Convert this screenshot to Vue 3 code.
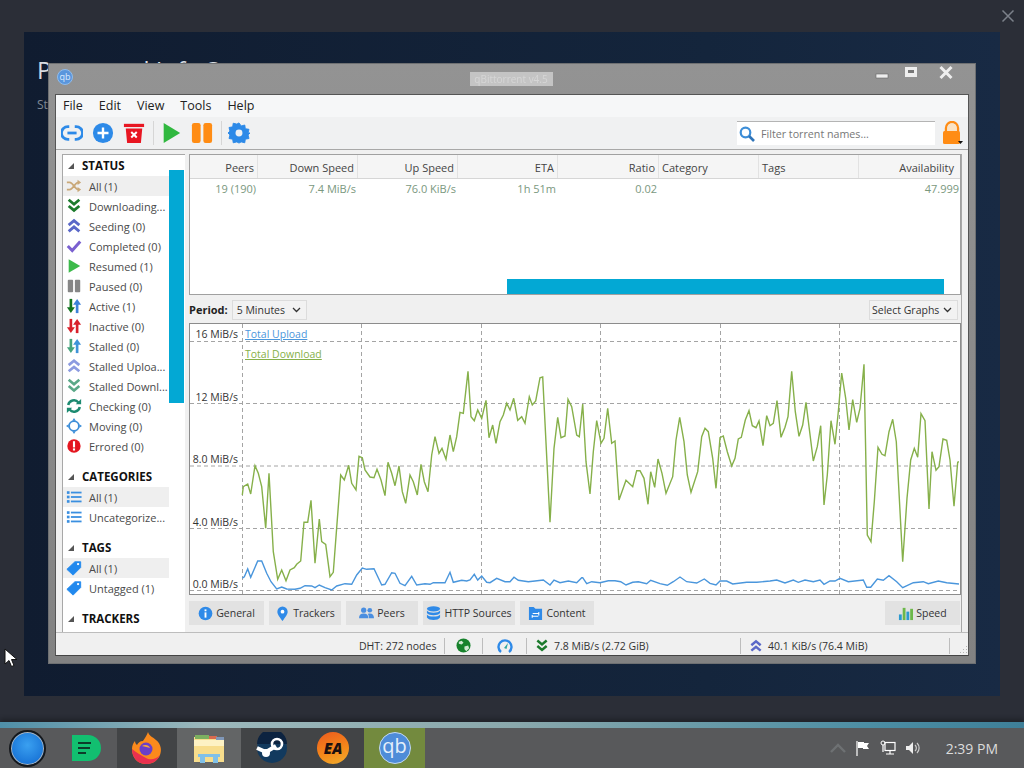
<script setup>
const statusItems = [
  { icon: 'shuffle', label: 'All (1)', on: true },
  { icon: 'dl', label: 'Downloading...' },
  { icon: 'ul', label: 'Seeding (0)' },
  { icon: 'check', label: 'Completed (0)' },
  { icon: 'play', label: 'Resumed (1)' },
  { icon: 'pause', label: 'Paused (0)' },
  { icon: 'active', label: 'Active (1)' },
  { icon: 'inactive', label: 'Inactive (0)' },
  { icon: 'stalled', label: 'Stalled (0)' },
  { icon: 'sul', label: 'Stalled Uploa...' },
  { icon: 'sdl', label: 'Stalled Downl...' },
  { icon: 'checking', label: 'Checking (0)' },
  { icon: 'moving', label: 'Moving (0)' },
  { icon: 'error', label: 'Errored (0)' },
];
const catItems = [
  { icon: 'list', label: 'All (1)', on: true },
  { icon: 'list', label: 'Uncategorize...' },
];
const tagItems = [
  { icon: 'tag', label: 'All (1)', on: true },
  { icon: 'tag', label: 'Untagged (1)' },
];
const groups = [
  { title: 'STATUS', items: statusItems },
  { title: 'CATEGORIES', items: catItems },
  { title: 'TAGS', items: tagItems },
  { title: 'TRACKERS', items: [] },
];

const columns = [
  { name: 'Peers', value: '19 (190)', w: 68 },
  { name: 'Down Speed', value: '7.4 MiB/s', w: 100 },
  { name: 'Up Speed', value: '76.0 KiB/s', w: 100 },
  { name: 'ETA', value: '1h 51m', w: 100 },
  { name: 'Ratio', value: '0.02', w: 101 },
  { name: 'Category', value: '', w: 100, left: true },
  { name: 'Tags', value: '', w: 100, left: true },
  { name: 'Availability', value: '47.999', w: 101 },
];

const tabs = [
  { icon: 'info', label: 'General', w: 75 },
  { icon: 'pin', label: 'Trackers', w: 72 },
  { icon: 'peers', label: 'Peers', w: 72 },
  { icon: 'db', label: 'HTTP Sources', w: 92 },
  { icon: 'folder', label: 'Content', w: 74 },
];

// points read off the reference at 3x, two crops with different x origins
const greenA = [172,600,175,575,188,567,197,597,210,512,220,535,230,575,242,700,252,535,265,770,278,853,290,825,303,857,315,825,328,818,335,808,347,798,357,682,368,682,378,616,390,805,403,672,410,740,422,748,435,845,445,832,467,540,478,555,491,511,500,565,513,585,522,484,532,488,540,525,555,546,567,548,576,523,588,555,600,602,609,502,620,535,630,572,642,513,652,590,662,625,675,540,685,560,697,600,708,508,718,560,729,590,740,480,750,425,762,475,771,460,783,493,795,420,805,470,815,425,825,352,835,355,849,229,858,365,868,377,878,345,890,370,903,316,912,428,923,390,933,445,945,380,955,360,965,325,975,345,986,310,998,376,1010,365,1020,385,1033,305,1042,330,1052,318,1065,248,1073,246,1095,682,1107,460,1118,367,1128,428,1140,423,1149,313,1160,335,1175,420,1183,425,1193,327];
const greenB = [8,327,18,500,30,597,40,470,50,377,63,445,72,430,83,340,95,445,105,438,117,615,138,556,158,575,170,527,180,527,192,550,204,628,212,530,224,577,234,492,246,535,258,595,278,545,288,435,299,367,312,440,322,540,333,592,353,530,365,425,375,400,385,410,398,490,408,580,420,428,430,423,442,470,455,513,465,490,475,432,484,427,496,375,507,347,517,392,528,398,537,378,549,452,560,362,570,392,580,385,591,317,603,427,615,397,624,365,635,229,646,350,657,424,668,390,678,322,700,498,712,455,722,392,732,630,742,540,753,377,765,448,775,350,785,234,797,310,807,405,818,314,830,382,840,340,852,208,862,720,873,740,883,620,894,457,906,478,915,482,927,410,938,373,949,440,968,800,981,610,992,495,1003,460,1013,487,1023,356,1035,377,1047,642,1056,470,1068,526,1077,515,1089,432,1100,436,1110,495,1122,634,1133,502,1137,500];
const blueA = [172,850,178,845,188,822,197,847,218,798,230,798,245,835,258,860,275,882,290,876,305,882,330,883,345,880,360,872,380,873,390,878,403,870,420,878,440,885,455,873,480,866,500,868,515,840,532,819,545,823,567,821,590,870,600,868,620,833,630,835,645,865,660,872,680,844,695,870,720,866,735,868,745,863,780,863,795,832,805,862,830,856,845,858,855,855,868,838,878,855,890,843,905,862,915,863,935,850,960,860,975,860,987,847,1000,856,1030,860,1050,858,1075,855,1095,870,1107,855,1125,863,1150,858,1175,863,1190,848];
const blueB = [8,848,20,866,35,860,60,863,85,857,105,857,122,860,138,870,158,862,175,860,200,866,212,856,240,866,262,871,280,860,300,846,320,860,350,864,373,852,390,865,408,870,420,858,440,858,458,867,500,862,530,862,570,858,590,855,615,864,640,855,655,862,675,855,700,860,720,855,732,868,750,858,765,858,780,850,805,860,850,855,860,877,872,877,892,852,910,856,927,842,950,860,968,878,1000,863,1030,860,1045,866,1075,858,1100,863,1137,867];

// chart box starts at 190,324
const toPoints = (a, b) => {
  const out = [];
  for (let i = 0; i < a.length; i += 2) {
    out.push(`${(185 + a[i] / 3 - 190).toFixed(1)},${(295 + a[i + 1] / 3 - 324).toFixed(1)}`);
  }
  for (let i = 0; i < b.length; i += 2) {
    out.push(`${(580 + b[i] / 3 - 190).toFixed(1)},${(295 + b[i + 1] / 3 - 324).toFixed(1)}`);
  }
  return out.join(' ');
};
const greenLine = toPoints(greenA, greenB);
const blueLine = toPoints(blueA, blueB);

const gridY = [17.5, 79.5, 142, 204.5, 266.5];
const gridX = [52.5, 171.5, 291.5, 410.5, 530.5, 649.5];
const yLabels = [
  { t: '16 MiB/s', y: 3 },
  { t: '12 MiB/s', y: 66 },
  { t: '8.0 MiB/s', y: 128 },
  { t: '4.0 MiB/s', y: 191 },
  { t: '0.0 MiB/s', y: 253 },
];
</script>

<template>
  <div class="screen">
    <svg class="defs" width="0" height="0">
      <defs>
        <symbol id="shuffle" viewBox="0 0 18 18">
          <path d="M1 5h3c4 0 6 8 10 8M1 13h3c4 0 6-8 10-8" fill="none" stroke="#c9a878" stroke-width="2"/>
          <path d="M13 2l4 3-4 3zM13 10l4 3-4 3z" fill="#c9a878"/>
        </symbol>
        <symbol id="dl" viewBox="0 0 18 18">
          <path d="M3 2l6 5 6-5M3 9l6 5 6-5" fill="none" stroke="#1b7a2c" stroke-width="3.2"/>
        </symbol>
        <symbol id="ul" viewBox="0 0 18 18">
          <path d="M3 8l6-5 6 5M3 15l6-5 6 5" fill="none" stroke="#5a68c8" stroke-width="3.2"/>
        </symbol>
        <symbol id="sul" viewBox="0 0 18 18">
          <path d="M3 8l6-5 6 5M3 15l6-5 6 5" fill="none" stroke="#8c9be0" stroke-width="3"/>
        </symbol>
        <symbol id="sdl" viewBox="0 0 18 18">
          <path d="M3 2l6 5 6-5M3 9l6 5 6-5" fill="none" stroke="#5aa888" stroke-width="3"/>
        </symbol>
        <symbol id="check" viewBox="0 0 18 18">
          <path d="M2 9l5 5 9-10" fill="none" stroke="#7a60d0" stroke-width="3.4"/>
        </symbol>
        <symbol id="play" viewBox="0 0 18 18">
          <path d="M3 1.5l13 7.5-13 7.5z" fill="#3cba4a"/>
        </symbol>
        <symbol id="pause" viewBox="0 0 18 18">
          <rect x="2" y="2" width="6" height="14" rx="1" fill="#868686"/>
          <rect x="10" y="2" width="6" height="14" rx="1" fill="#868686"/>
        </symbol>
        <symbol id="active" viewBox="0 0 18 18">
          <path d="M5.5 1v12" stroke="#12751f" stroke-width="3"/>
          <path d="M1 10.5h9l-4.5 6.5z" fill="#12751f"/>
          <path d="M12.5 17V5" stroke="#3d82d8" stroke-width="3"/>
          <path d="M8 7.5h9L12.5 1z" fill="#3d82d8"/>
        </symbol>
        <symbol id="inactive" viewBox="0 0 18 18">
          <path d="M5.5 1v12" stroke="#d8202a" stroke-width="3"/>
          <path d="M1 10.5h9l-4.5 6.5z" fill="#d8202a"/>
          <path d="M12.5 17V5" stroke="#d8202a" stroke-width="3"/>
          <path d="M8 7.5h9L12.5 1z" fill="#d8202a"/>
        </symbol>
        <symbol id="stalled" viewBox="0 0 18 18">
          <path d="M5.5 1v12" stroke="#45a47c" stroke-width="3"/>
          <path d="M1 10.5h9l-4.5 6.5z" fill="#45a47c"/>
          <path d="M12.5 17V5" stroke="#3f94d8" stroke-width="3"/>
          <path d="M8 7.5h9L12.5 1z" fill="#3f94d8"/>
        </symbol>
        <symbol id="checking" viewBox="0 0 18 18">
          <path d="M2.5 8a6.6 6.6 0 0 1 11.5-3" fill="none" stroke="#1c8a70" stroke-width="2.8"/>
          <path d="M11 7h6V1z" fill="#1c8a70"/>
          <path d="M15.5 10a6.6 6.6 0 0 1-11.5 3" fill="none" stroke="#1c8a70" stroke-width="2.8"/>
          <path d="M7 11H1v6z" fill="#1c8a70"/>
        </symbol>
        <symbol id="moving" viewBox="0 0 18 18">
          <circle cx="9" cy="9" r="5.5" fill="#fff" stroke="#3d8ed8" stroke-width="2"/>
          <path d="M9 0l2 3H7zM9 18l-2-3h4zM0 9l3-2v4zM18 9l-3 2V7z" fill="#3d8ed8"/>
        </symbol>
        <symbol id="error" viewBox="0 0 18 18">
          <circle cx="9" cy="9" r="7.5" fill="#e41620"/>
          <rect x="7.8" y="3.6" width="2.4" height="7" fill="#fff"/>
          <rect x="7.8" y="11.7" width="2.4" height="2.4" fill="#fff"/>
        </symbol>
        <symbol id="list" viewBox="0 0 18 18">
          <g fill="#3a8fe0">
            <rect x="1" y="2.5" width="3" height="3"/>
            <rect x="1" y="7.5" width="3" height="3"/>
            <rect x="1" y="12.5" width="3" height="3"/>
            <rect x="5.5" y="3" width="12" height="2"/>
            <rect x="5.5" y="8" width="12" height="2"/>
            <rect x="5.5" y="13" width="12" height="2"/>
          </g>
        </symbol>
        <symbol id="tag" viewBox="0 0 18 18">
          <path d="M1 10.5L10 2h6.5v6.5L8 17z" fill="#2189ee" stroke="#2189ee" stroke-linejoin="round"/>
          <circle cx="13.6" cy="4.6" r="1.3" fill="#fff"/>
        </symbol>
        <symbol id="info" viewBox="0 0 16 16">
          <circle cx="8" cy="8" r="7.3" fill="#2f8ae8"/>
          <rect x="7" y="6.8" width="2" height="5.6" fill="#fff"/>
          <rect x="7" y="3.6" width="2" height="2" fill="#fff"/>
        </symbol>
        <symbol id="pin" viewBox="0 0 16 16">
          <path d="M8 16C5 11.5 2.5 9 2.5 6a5.5 5.5 0 0 1 11 0c0 3-2.5 5.5-5.5 10z" fill="#2f8ae8"/>
          <circle cx="8" cy="6" r="2" fill="#fff"/>
        </symbol>
        <symbol id="peers" viewBox="0 0 16 16">
          <g fill="#4a8ee0">
            <circle cx="5" cy="4.5" r="2.8"/>
            <circle cx="11.5" cy="4.5" r="2.5"/>
            <path d="M0 13c0-3.5 2-5 5-5s5 1.5 5 5z"/>
            <path d="M10.5 13H16c0-3-1.5-5-4.500-5-.8 0-1.500.2-2 .4 1 1.100 1 3 1 4.600z"/>
          </g>
        </symbol>
        <symbol id="db" viewBox="0 0 16 16">
          <g fill="#2f8ae8">
            <ellipse cx="8" cy="3" rx="7" ry="2.8"/>
            <path d="M1 4.8c1 1.700 4 2.400 7 2.400s6-.7 7-2.400v2.700c-1 1.600-4 2.300-7 2.300s-6-.7-7-2.300z"/>
            <path d="M1 9c1 1.600 4 2.300 7 2.300S14 10.600 15 9v3.300c-1 1.800-4 2.700-7 2.700s-6-.9-7-2.700z"/>
          </g>
        </symbol>
        <symbol id="folder" viewBox="0 0 16 16">
          <path d="M1 1h5l2 2h7v12H1z" fill="#2f8ae8"/>
          <path d="M5 8h6.500M11.500 6.500V10M11 11H4.500M4.500 9.500V12.500" stroke="#fff" stroke-width="1.100" fill="none"/>
        </symbol>
      </defs>
    </svg>

    <button class="dismiss" aria-label="Close">
      <svg width="14" height="14" viewBox="0 0 14 14"><path d="M1.500 1.500l11 11M12.500 1.500l-11 11" stroke="#7c818a" stroke-width="1.500"/></svg>
    </button>

    <div class="dialog">
      <h1>Personnel Info Sync</h1>
      <p>Status</p>
    </div>

    <!-- free-floating app window -->
    <div class="window">
      <div class="titlebar">
        <span class="qb-small">qb</span>
        <span class="title-blur">qBittorrent v4.5</span>
        <div class="win-buttons">
          <svg width="16" height="16" viewBox="0 0 16 16"><rect x="2" y="9" width="12" height="4" fill="#eee" stroke="#666" stroke-width=".6"/></svg>
          <svg width="16" height="16" viewBox="0 0 16 16"><rect x="2" y="2" width="12" height="10" fill="#eee"/><rect x="5" y="5" width="6" height="3" fill="#777"/></svg>
          <svg class="win-close" width="16" height="16" viewBox="0 0 16 16"><path d="M2.500 2l11 11M13.500 2l-11 11" stroke="#eee" stroke-width="3"/></svg>
        </div>
      </div>

      <div class="client">
        <div class="menubar">
          <span>File</span><span>Edit</span><span>View</span><span>Tools</span><span>Help</span>
        </div>

        <div class="toolbar">
          <svg class="tool" viewBox="0 0 24 24">
            <path d="M9 5H7.500a7 7 0 0 0 0 14H9M15 5h1.500a7 7 0 0 1 0 14H15" fill="none" stroke="#2d8ae8" stroke-width="3"/>
            <rect x="7" y="10.500" width="10" height="3" fill="#2d8ae8"/>
          </svg>
          <svg class="tool" viewBox="0 0 24 24">
            <circle cx="12" cy="12" r="11" fill="#2d8ae8"/>
            <path d="M12 6v12M6 12h12" stroke="#fff" stroke-width="2.600"/>
          </svg>
          <svg class="tool" viewBox="0 0 24 24">
            <rect x="1" y="2" width="22" height="3.500" fill="#e81622"/>
            <path d="M3 7h18l-1.500 16h-15z" fill="#e81622"/>
            <path d="M9 11l6 6M15 11l-6 6" stroke="#fff" stroke-width="2.200"/>
          </svg>
          <i class="sep"></i>
          <svg class="tool" viewBox="0 0 24 24"><path d="M4 1l18 11L4 23z" fill="#30b83f"/></svg>
          <svg class="tool" viewBox="0 0 24 24">
            <rect x="1" y="1" width="9.500" height="22" rx="2.500" fill="#ff8c14"/>
            <rect x="13.500" y="1" width="9.500" height="22" rx="2.500" fill="#ff8c14"/>
          </svg>
          <i class="sep"></i>
          <svg class="tool" viewBox="0 0 24 24">
            <path d="M12 1l2.400 3.300 3.900-1 .6 4 4 .7-1 3.900L24 12l-2.100 2.100 1 3.900-4 .7-.6 4-3.900-1L12 23l-2.400-1.300-3.900 1-.6-4-4-.7 1-3.900L0 12l2.100-2.100-1-3.900 4-.7.6-4 3.900 1z" fill="#2d8ae8" stroke="#2d8ae8" stroke-linejoin="round"/>
            <circle cx="12" cy="12" r="3.800" fill="#eef1f4"/>
          </svg>
          <div class="filter">
            <svg width="16" height="16" viewBox="0 0 16 16">
              <circle cx="6.500" cy="6.500" r="4.800" fill="none" stroke="#3d8ed8" stroke-width="2.200"/>
              <path d="M10 10l5 5" stroke="#2f74b8" stroke-width="2.600"/>
            </svg>
            <span>Filter torrent names...</span>
          </div>
          <div class="lock">
            <svg width="22" height="24" viewBox="0 0 22 24">
              <path d="M4 11V7a6 6 0 0 1 12 0v4" fill="none" stroke="#ff8c14" stroke-width="2.400"/>
              <path d="M5.500 11V7a4.500 4.500 0 0 1 9 0v4z" fill="#fbe3c4"/>
              <rect x="1" y="10" width="17" height="13" rx="1.500" fill="#ff8c14"/>
              <path d="M16 20h5l-2.500 3z" fill="#111"/>
            </svg>
          </div>
        </div>

        <div class="body">
          <aside class="sidebar">
            <section v-for="g in groups" :key="g.title" class="group">
              <div class="group-title"><i class="caret"></i>{{ g.title }}</div>
              <div v-for="item in g.items" :key="item.label" class="row" :class="{ on: item.on }">
                <svg class="row-icon"><use :href="'#' + item.icon" /></svg>
                <span>{{ item.label }}</span>
              </div>
            </section>
            <div class="side-thumb"></div>
          </aside>

          <main class="main">
            <div class="torrents">
              <div class="thead">
                <div v-for="c in columns" :key="c.name" class="th" :class="{ left: c.left }" :style="{ width: c.w + 'px' }">{{ c.name }}</div>
              </div>
              <div class="tbody">
                <div v-for="c in columns" :key="c.name" class="td" :style="{ width: c.w + 'px' }">{{ c.value }}</div>
              </div>
              <div class="h-thumb"></div>
            </div>

            <div class="period">
              <b>Period:</b>
              <div class="combo">5 Minutes<svg width="9" height="6" viewBox="0 0 9 6"><path d="M1 1l3.500 3.500L8 1" fill="none" stroke="#333" stroke-width="1.300"/></svg></div>
              <div class="combo graphs">Select Graphs<svg width="9" height="6" viewBox="0 0 9 6"><path d="M1 1l3.500 3.500L8 1" fill="none" stroke="#333" stroke-width="1.300"/></svg></div>
            </div>

            <div class="chart">
              <svg class="plot" width="769" height="270">
                <line v-for="y in gridY" :key="'y' + y" x1="0" x2="769" :y1="y" :y2="y" class="grid" />
                <line v-for="x in gridX" :key="'x' + x" y1="0" y2="270" :x1="x" :x2="x" class="grid" />
                <polyline :points="greenLine" fill="none" stroke="#86b04a" stroke-width="1.400" />
                <polyline :points="blueLine" fill="none" stroke="#4a96dc" stroke-width="1.400" />
              </svg>
              <span v-for="l in yLabels" :key="l.t" class="ylabel" :style="{ top: l.y + 'px' }">{{ l.t }}</span>
              <span class="legend up">Total Upload</span>
              <span class="legend down">Total Download</span>
            </div>

            <div class="tabs">
              <div v-for="t in tabs" :key="t.label" class="tab" :style="{ width: t.w + 'px' }">
                <svg class="tab-icon"><use :href="'#' + t.icon" /></svg>{{ t.label }}
              </div>
              <div class="tab speed">
                <svg class="tab-icon" viewBox="0 0 16 16">
                  <rect x="1" y="9" width="3" height="6" fill="#2d9ad0"/>
                  <rect x="5" y="2" width="3" height="13" fill="#6cb84a"/>
                  <rect x="9" y="6" width="3" height="9" fill="#2d9ad0"/>
                  <rect x="13" y="3" width="3" height="12" fill="#6cb84a"/>
                </svg>Speed
              </div>
            </div>
          </main>
        </div>

        <div class="statusbar">
          <span class="st-dht">DHT: 272 nodes</span>
          <i class="st-sep"></i>
          <svg class="st-icon" width="15" height="15" viewBox="0 0 16 16">
            <circle cx="8" cy="8" r="7.500" fill="#17822c"/>
            <path d="M3 4l3-1 2 2-2 2-3-1zM9 9l4-1 1 3-3 3-2-2z" fill="#cfe8d2"/>
          </svg>
          <i class="st-sep"></i>
          <svg class="st-icon gauge" width="16" height="16" viewBox="0 0 16 16">
            <path d="M4 14A6.500 6.500 0 1 1 12 14" fill="none" stroke="#2f8ae8" stroke-width="2.400"/>
            <path d="M7 10l4-5-1.500 6z" fill="#2fa8a0"/>
          </svg>
          <i class="st-sep"></i>
          <svg class="st-chev" width="14" height="14"><use href="#dl" /></svg>
          <span class="st-dl">7.8 MiB/s (2.72 GiB)</span>
          <i class="st-sep"></i>
          <svg class="st-chev" width="14" height="14"><use href="#ul" /></svg>
          <span class="st-ul">40.1 KiB/s (76.4 MiB)</span>
          <i class="st-sep"></i>
          <svg class="grip" width="10" height="10" viewBox="0 0 10 10">
            <path d="M8 1h1v1H8zM5 4h1v1H5zM8 4h1v1H8zM2 7h1v1H2zM5 7h1v1H5zM8 7h1v1H8z" fill="#b4b4b4"/>
          </svg>
        </div>
      </div>
    </div>

    <svg class="cursor" width="14" height="20" viewBox="0 0 14 20">
      <path d="M1 1v15l4-3.500 2.500 6 2.500-1-2.500-6H13z" fill="#fff" stroke="#111"/>
    </svg>

    <div class="taskbar">
      <div class="glow"></div>
      <div class="tasks">
        <div class="task t-start">
          <span class="orb"></span>
        </div>
        <div class="task t-green">
          <svg width="32" height="32" viewBox="0 0 32 32">
            <path d="M2 3h16a13 13 0 0 1 0 26H2z" fill="#12bf70"/>
            <path d="M8 11h13M8 16h12M8 21h8" stroke="#0d3b2a" stroke-width="2.200"/>
          </svg>
        </div>
        <div class="task t-dark t-fox">
          <svg width="34" height="34" viewBox="0 0 34 34">
            <path d="M18 1c1 4 5 5 8 8 5 4 6 10 4 15-3 7-9 9-14 9-8 0-14-6-14-15 0-3 1-6 3-8 0 2 1 3 2 4 1-2 3-4 6-4 2-3 4-6 5-9z" fill="#fb8a1c"/>
            <path d="M2 18c0 9 6 15 14 15 5 0 11-2 14-9-4 5-11 5-14 3-5-3-9-5-14-9z" fill="#e9314f"/>
            <circle cx="16" cy="18" r="6.500" fill="#6a3fc8"/>
            <path d="M12 15c3-2 7-1 8 2-2-1-5-1-8-2z" fill="#f8a83a"/>
          </svg>
        </div>
        <div class="task t-light">
          <svg width="34" height="34" viewBox="0 0 34 34">
            <rect x="2" y="6" width="30" height="25" fill="#f7dd8c"/>
            <rect x="3" y="4" width="14" height="4" fill="#7cb060"/>
            <rect x="17" y="5" width="8" height="3" fill="#d86a50"/>
            <rect x="24" y="6" width="8" height="3" fill="#8098b8"/>
            <rect x="2" y="9" width="30" height="6" fill="#fdf2c4"/>
            <path d="M6 23h22v3h-2v6h-5v-6H13v6H8v-6H6z" fill="#7fc0e8"/>
          </svg>
        </div>
        <div class="task t-dark">
          <svg width="32" height="32" viewBox="0 0 32 32">
            <circle cx="16" cy="16" r="15" fill="#123a5e"/>
            <path d="M1 12a15 15 0 0 1 30 0z" fill="#0c2340"/>
            <path d="M1 16l9 4 10-6" stroke="#fff" stroke-width="4" fill="none"/>
            <circle cx="21" cy="12" r="5" fill="none" stroke="#fff" stroke-width="2.600"/>
            <circle cx="10" cy="21" r="4" fill="#fff"/>
          </svg>
        </div>
        <div class="task t-dark t-ea">
          <span class="ea">EA</span>
        </div>
        <div class="task t-qb">
          <span class="qb-big">qb</span>
        </div>
      </div>
      <div class="tray">
        <svg width="16" height="10" viewBox="0 0 16 10"><path d="M1 9l7-7 7 7" fill="none" stroke="#6e7173" stroke-width="2.400"/></svg>
        <svg width="16" height="16" viewBox="0 0 16 16"><path d="M2 1v15" stroke="#fff" stroke-width="1.200"/><path d="M3 2h6v1h5l-2 3 2 3H8V8H3z" fill="#fff"/></svg>
        <svg width="16" height="16" viewBox="0 0 16 16"><rect x="5" y="2.500" width="10" height="8" fill="none" stroke="#fff" stroke-width="1.200"/><circle cx="3" cy="3" r="2" fill="none" stroke="#fff"/><path d="M3 5v7M6 14h8M10 10.500V14" stroke="#fff" stroke-width="1.200"/></svg>
        <svg width="16" height="16" viewBox="0 0 16 16"><path d="M1 6h3l4-4v12l-4-4H1z" fill="#eee"/><path d="M10 5a4 4 0 0 1 0 6M12 3a7 7 0 0 1 0 10" fill="none" stroke="#ccc" stroke-width="1.200"/></svg>
        <span class="clock">2:39 PM</span>
      </div>
    </div>
  </div>
</template>

<style>
html, body {
  margin: 0;
  background: #2b2e37;
}
</style>

<style scoped>
.screen {
  position: relative;
  width: 1024px;
  height: 768px;
  overflow: hidden;
  background: #2b2e37;
  font-family: "Open Sans", "Noto Sans", sans-serif;
  font-size: 11px;
  color: #333;
}

.defs {
  position: absolute;
}

.dismiss {
  position: absolute;
  top: 9px;
  left: 1001px;
  padding: 0;
  border: 0;
  background: none;
}

.dialog {
  position: absolute;
  left: 24px;
  top: 32px;
  width: 976px;
  height: 664px;
  box-sizing: border-box;
  padding: 24px 13px;
  background: linear-gradient(90deg, #101c30, #14253c 70%, #182a44);
  color: #d8dce2;
}

.dialog h1 {
  margin: 0;
  font-size: 24px;
  font-weight: 400;
  line-height: 28px;
  white-space: nowrap;
}

.dialog p {
  margin: 12px 0 0;
  font-size: 12px;
  color: #7f8894;
}

.window {
  position: absolute;
  left: 48px;
  top: 63px;
  width: 928px;
  height: 601px;
  box-sizing: border-box;
  padding: 0 6px 7px;
  background: linear-gradient(180deg, #939393, #828282);
  border: 1px solid #6e7072;
  display: flex;
  flex-direction: column;
}

.titlebar {
  position: relative;
  height: 30px;
  flex: none;
  display: flex;
  align-items: center;
  justify-content: center;
}

.qb-small {
  position: absolute;
  left: 2px;
  top: 5px;
  width: 16px;
  height: 16px;
  border-radius: 50%;
  background: #5a96dc;
  border: 1px solid #8fbcec;
  box-sizing: border-box;
  color: #dcecff;
  font-size: 9px;
  line-height: 13px;
  text-align: center;
}

.title-blur {
  width: 83px;
  height: 14px;
  margin-left: -2px;
  background: #c4c4c4;
  color: #d6d6d6;
  font-size: 10px;
  line-height: 14px;
  text-align: center;
  white-space: nowrap;
  filter: blur(.6px);
}

.win-buttons {
  position: absolute;
  right: 15px;
  top: 1px;
  display: flex;
  gap: 13px;
}

.win-close {
  margin-left: 6px;
}

.client {
  flex: 1;
  display: flex;
  flex-direction: column;
  background: #f0f0f0;
  border: 1px solid #555;
  border-bottom-color: #444;
  min-height: 0;
}

.menubar {
  height: 22px;
  flex: none;
  display: flex;
  align-items: center;
  gap: 16px;
  padding: 0 0 2px 7px;
  box-sizing: border-box;
  background: #f6f7f8;
  font-size: 12.500px;
  color: #222;
}

.toolbar {
  height: 33px;
  flex: none;
  display: flex;
  align-items: center;
  padding-left: 5px;
  border-bottom: 1px solid #a8a8a8;
  background: #f0f1f2;
  box-sizing: border-box;
}

.tool {
  width: 22px;
  height: 22px;
  margin-right: 9px;
}

.sep {
  width: 1px;
  height: 24px;
  margin: 0 6px 0 -1px;
  background: #d6d6d6;
}

.filter {
  margin-left: auto;
  width: 198px;
  height: 24px;
  box-sizing: border-box;
  display: flex;
  align-items: center;
  gap: 6px;
  padding-left: 2px;
  background: #fff;
  border-top: 1px solid #b4b4b4;
  color: #777;
  font-size: 10.700px;
}

.lock {
  width: 33px;
  padding-left: 7px;
  box-sizing: border-box;
  height: 24px;
}

.body {
  flex: 1;
  display: flex;
  min-height: 0;
  padding: 4px 6px 0 6px;
  gap: 4px;
}

.sidebar {
  position: relative;
  width: 123px;
  flex: none;
  box-sizing: border-box;
  background: #fff;
  border-left: 1px solid #a8a8a8;
  border-top: 1px solid #a8a8a8;
  overflow: hidden;
}

.group {
  margin-bottom: 10px;
}

.group-title {
  height: 21px;
  line-height: 22px;
  padding-left: 5px;
  font-weight: 700;
  font-size: 11.500px;
  color: #111;
  display: flex;
  align-items: center;
}

.caret {
  width: 0;
  height: 0;
  margin-right: 8px;
  border-style: solid;
  border-width: 0 0 6px 6px;
  border-color: transparent transparent #555 transparent;
}

.row {
  width: 106px;
  height: 20px;
  box-sizing: border-box;
  display: flex;
  align-items: center;
  gap: 7px;
  padding-left: 3px;
  white-space: nowrap;
  overflow: hidden;
  color: #4a4a4a;
}

.row.on {
  background: #efefef;
}

.row-icon {
  width: 16px;
  height: 16px;
  flex: none;
}

.side-thumb {
  position: absolute;
  left: 106px;
  top: 15px;
  width: 15px;
  height: 233px;
  background: #03a8d4;
}

.main {
  flex: 1;
  min-width: 0;
  display: flex;
  flex-direction: column;
  border-right: 1px solid #a8a8a8;
}

.torrents {
  position: relative;
  height: 141px;
  flex: none;
  box-sizing: border-box;
  background: #fff;
  border: 1px solid #a0a0a0;
  overflow: hidden;
}

.thead {
  display: flex;
  height: 23px;
  background: #f5f5f5;
  border-bottom: 1px solid #d6d6d6;
}

.th {
  box-sizing: border-box;
  flex: none;
  line-height: 25px;
  text-align: right;
  padding-right: 3px;
  border-right: 1px solid #e2e2e2;
  color: #444;
  white-space: nowrap;
}

.th.left {
  text-align: left;
  padding-left: 3px;
}

.th:last-child {
  padding-right: 6px;
  border-right: 0;
}

.tbody {
  display: flex;
  height: 20px;
}

.td {
  box-sizing: border-box;
  flex: none;
  line-height: 20px;
  text-align: right;
  padding-right: 2px;
  color: #7a987e;
  white-space: nowrap;
}

.td:last-child {
  padding-right: 1px;
}

.h-thumb {
  position: absolute;
  left: 317px;
  top: 124px;
  width: 437px;
  height: 15px;
  background: #03a8d4;
}

.period {
  height: 28px;
  flex: none;
  display: flex;
  align-items: center;
  gap: 4px;
  padding: 1px 3px 0 0;
  box-sizing: border-box;
}

.period b {
  color: #222;
}

.combo {
  height: 20px;
  box-sizing: border-box;
  display: flex;
  align-items: center;
  justify-content: space-between;
  padding: 0 5px 0 4px;
  width: 75px;
  background: #f2f2f2;
  border: 1px solid #dcdcdc;
  color: #333;
  font-size: 10.500px;
  white-space: nowrap;
}

.combo.graphs {
  margin-left: auto;
  width: 89px;
  padding-left: 2px;
}

.chart {
  position: relative;
  height: 272px;
  flex: none;
  box-sizing: border-box;
  background: #fff;
  border: 1px solid #8c8c8c;
  overflow: hidden;
}

.plot {
  display: block;
}

.grid {
  stroke: #a4a4a4;
  stroke-width: 1;
  stroke-dasharray: 4 3;
}

.ylabel {
  position: absolute;
  right: 720px;
  padding: 0 2px;
  line-height: 15px;
  font-size: 10.500px;
  white-space: nowrap;
  color: #333;
}

.legend {
  position: absolute;
  left: 55px;
  font-size: 10.500px;
  line-height: 15px;
  text-decoration: underline;
}

.legend.up {
  top: 3px;
  color: #4a96dc;
}

.legend.down {
  top: 23px;
  color: #86b04a;
}

.tabs {
  display: flex;
  gap: 5px;
  padding-top: 6px;
  font-size: 10.500px;
}

.tab {
  height: 24px;
  box-sizing: border-box;
  display: flex;
  align-items: center;
  justify-content: center;
  gap: 3px;
  background: #e2e2e2;
  white-space: nowrap;
  color: #333;
}

.tab.speed {
  margin-left: auto;
  margin-right: 1px;
  width: 75px;
}

.tab-icon {
  width: 15px;
  height: 15px;
}

.statusbar {
  height: 23px;
  flex: none;
  display: flex;
  align-items: center;
  background: #f0f0f0;
  border-top: 1px solid #bdbdbd;
  box-sizing: border-box;
  padding: 3px 0 0 303px;
  color: #333;
  font-size: 10.500px;
  white-space: nowrap;
}

.st-dht {
  width: 85px;
}

.st-sep {
  width: 1px;
  height: 16px;
  background: #bdbdbd;
  flex: none;
}

.st-icon {
  margin: 0 11px;
}

.st-icon.gauge {
  margin: 0 13.500px;
}

.st-chev {
  margin: 0 5px 0 8px;
}

.st-dl {
  width: 186px;
}

.st-ul {
  width: 181px;
}

.grip {
  margin: 8px 0 0 8px;
}

.cursor {
  position: absolute;
  left: 4px;
  top: 648px;
}

.taskbar {
  position: absolute;
  left: 0;
  right: 0;
  top: 722px;
  height: 46px;
  display: flex;
  flex-direction: column;
}

.glow {
  height: 6px;
  background: linear-gradient(90deg, #4f8fa8, #9cb8bc 20%, #8aa8ac 50%, #4c8ea4 85%, #3e7f98);
  box-shadow: 0 -3px 5px rgba(0, 0, 0, .3);
}

.tasks {
  flex: 1;
  display: flex;
  background: #58595b;
}

.task {
  width: 61px;
  display: flex;
  align-items: center;
  justify-content: center;
  flex: none;
}

.t-start {
  width: 54px;
}

.t-green {
  width: 63px;
}

.t-dark {
  background: #424446;
}

.t-fox {
  width: 60px;
}

.t-light {
  background: #636566;
  width: 64px;
}

.t-ea {
  width: 62px;
}

.t-qb {
  background: #738a3e;
}

.orb {
  width: 37px;
  height: 37px;
  border-radius: 50%;
  box-sizing: border-box;
  border: 2px solid #15181c;
  box-shadow: 0 0 0 1px #aeb4ba inset;
  background: radial-gradient(circle at 50% 40%, #3aa0f0, #1a76d8 70%);
}

.ea {
  width: 32px;
  height: 32px;
  border-radius: 50%;
  background: linear-gradient(160deg, #ec5a1e, #f48a1a 60%, #f0b030);
  color: #1c1010;
  font-size: 15px;
  font-style: italic;
  font-weight: 800;
  text-align: center;
  line-height: 32px;
}

.qb-big {
  width: 32px;
  height: 32px;
  border-radius: 50%;
  box-sizing: border-box;
  background: #4e8cd8;
  border: 1.500px solid #c4daf2;
  color: #e4effb;
  font-size: 20px;
  line-height: 26px;
  text-align: center;
}

.tray {
  position: absolute;
  right: 0;
  bottom: 0;
  height: 40px;
  display: flex;
  align-items: center;
  gap: 9px;
  padding-right: 26px;
  color: #ddd;
}

.clock {
  margin-left: 16px;
  font-size: 14px;
  color: #dcdcdc;
}
</style>
